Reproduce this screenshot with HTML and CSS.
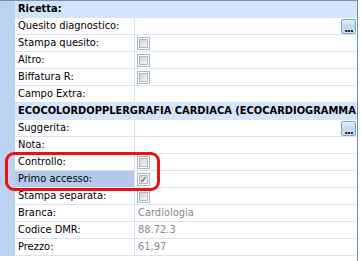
FILE: index.html
```html
<!DOCTYPE html>
<html lang="it">
<head>
    <meta charset="UTF-8">
    <title>Ricetta</title>
    <link rel="stylesheet" href="styles.css">
</head>
<body>
    <div class="grid">
        <!-- Sezione ricetta -->
        <div class="row section"><div class="gutter"></div><div class="title">Ricetta:</div></div>
        <div class="row"><div class="gutter"></div><div class="label">Quesito diagnostico:</div><div class="value"><span class="dots">...</span></div></div>
        <div class="row"><div class="gutter"></div><div class="label">Stampa quesito:</div><div class="value"><span class="check"><span class="inner"></span></span></div></div>
        <div class="row"><div class="gutter"></div><div class="label">Altro:</div><div class="value"><span class="check"><span class="inner"></span></span></div></div>
        <div class="row"><div class="gutter"></div><div class="label">Biffatura R:</div><div class="value"><span class="check"><span class="inner"></span></span></div></div>
        <div class="row"><div class="gutter"></div><div class="label">Campo Extra:</div><div class="value"></div></div>

        <!-- Sezione prestazione -->
        <div class="row section"><div class="gutter"></div><div class="title">ECOCOLORDOPPLERGRAFIA CARDIACA (ECOCARDIOGRAMMA</div></div>
        <div class="row"><div class="gutter"></div><div class="label">Suggerita:</div><div class="value"><span class="dots">...</span></div></div>
        <div class="row"><div class="gutter"></div><div class="label">Nota:</div><div class="value"></div></div>
        <div class="row"><div class="gutter"></div><div class="label">Controllo:</div><div class="value"><span class="check"><span class="inner"></span></span></div></div>
        <div class="row"><div class="gutter"></div><div class="label selected">Primo accesso:</div><div class="value"><span class="check"><span class="inner checked">&#10003;</span></span></div></div>
        <div class="row"><div class="gutter"></div><div class="label">Stampa separata:</div><div class="value"><span class="check"><span class="inner"></span></span></div></div>
        <div class="row"><div class="gutter"></div><div class="label">Branca:</div><div class="value muted">Cardiologia</div></div>
        <div class="row"><div class="gutter"></div><div class="label">Codice DMR:</div><div class="value muted">88.72.3</div></div>
        <div class="row"><div class="gutter"></div><div class="label">Prezzo:</div><div class="value muted">61,97</div></div>

        <!-- Evidenziazione rossa -->
        <div class="highlight"></div>
    </div>
</body>
</html>
```

FILE: styles.css
```css
* {
    box-sizing: border-box;
    margin: 0;
    padding: 0;
}

body {
    background-color: #fff;
    font-family: "DejaVu Sans Condensed", "DejaVu Sans", sans-serif;
    font-size: 11px;
    color: #000;
}

/* Griglia delle proprietà */
.grid {
    position: relative;
    width: 358px;
    height: 261px;
    border-top: 1px solid #7290bd;
    border-right: 1px solid #6d8bb8;
}

.row {
    display: flex;
    height: 17px;
}

.gutter {
    width: 15px;
    flex: none;
    background-color: #bcd2f1;
}

.label {
    width: 120px;
    flex: none;
    padding: 1px 0 0 3px;
    border-right: 1px solid #d5e3f6;
    border-bottom: 1px solid #d5e3f6;
    white-space: nowrap;
    overflow: hidden;
}

.label.selected {
    background-color: #b6c9e9;
}

.value {
    flex: 1;
    display: flex;
    align-items: flex-start;
    padding: 1px 0 0 3px;
    border-bottom: 1px solid #d5e3f6;
    white-space: nowrap;
    overflow: hidden;
}

.value.muted {
    color: #8a8a8a;
}

/* Intestazione di sezione */
.section {
    background-color: #d4e4fa;
}

.section .title {
    flex: 1;
    padding: 1px 0 0 3px;
    font-weight: bold;
    white-space: nowrap;
    overflow: hidden;
}

/* Casella di controllo */
.check {
    width: 13px;
    height: 13px;
    margin: 1px 0 0 -1px;
    padding: 1px;
    border: 1px solid #a7b7ce;
    background-color: #fff;
}

.check .inner {
    display: block;
    width: 9px;
    height: 9px;
    border: 1px solid #b8b8b8;
    background: linear-gradient(135deg, #d2d2d2, #f7f7f7);
    font-size: 10px;
    line-height: 7px;
    text-align: center;
    color: #2c4b8d;
    font-weight: bold;
}

/* Pulsante "..." */
.dots {
    margin: 0 1px 0 auto;
    width: 15px;
    height: 15px;
    border: 1px solid #7f9fcc;
    border-radius: 2px;
    background: linear-gradient(#e6effc, #c3d6f1 50%, #d9e6f8);
    font-weight: bold;
    font-size: 11px;
    line-height: 17px;
    text-align: center;
    letter-spacing: -1px;
}

/* Rettangolo rosso sopra le righe */
.highlight {
    position: absolute;
    left: 5px;
    top: 151px;
    width: 155px;
    height: 39px;
    border: 3px solid #ee1111;
    border-radius: 9px;
}
```
